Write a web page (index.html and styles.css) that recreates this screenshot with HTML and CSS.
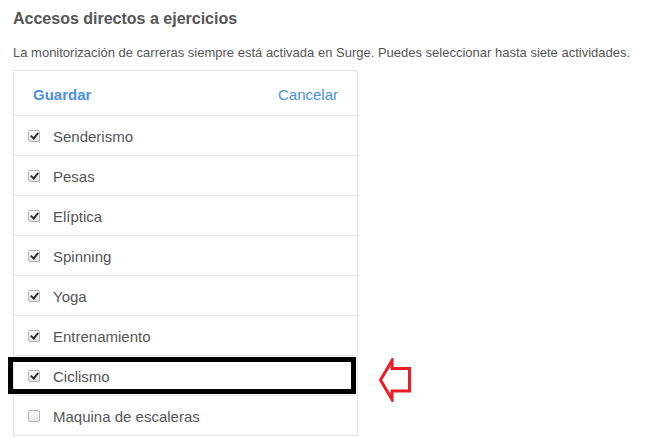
FILE: index.html
```html
<!DOCTYPE html>
<html lang="es">

<head>
    <meta charset="UTF-8">
    <meta name="viewport" content="width=device-width, initial-scale=1.0">
    <title>Accesos directos a ejercicios</title>
    <link rel="stylesheet" href="styles.css">
</head>

<body>
    <div class="page">
        <h2 class="title">Accesos directos a ejercicios</h2>
        <p class="note">La monitorización de carreras siempre está activada en Surge. Puedes seleccionar hasta siete actividades.</p>

        <div class="shortcut-list">
            <div class="list-header">
                <a class="btn-save" href="#">Guardar</a>
                <a class="btn-cancel" href="#">Cancelar</a>
            </div>

            <div class="list-row">
                <span class="check is-checked"></span>
                <span class="label">Senderismo</span>
            </div>
            <div class="list-row">
                <span class="check is-checked"></span>
                <span class="label">Pesas</span>
            </div>
            <div class="list-row">
                <span class="check is-checked"></span>
                <span class="label">Elíptica</span>
            </div>
            <div class="list-row">
                <span class="check is-checked"></span>
                <span class="label">Spinning</span>
            </div>
            <div class="list-row">
                <span class="check is-checked"></span>
                <span class="label">Yoga</span>
            </div>
            <div class="list-row">
                <span class="check is-checked"></span>
                <span class="label">Entrenamiento</span>
            </div>
            <div class="list-row marked">
                <span class="check is-checked"></span>
                <span class="label">Ciclismo</span>
                <!-- resaltado + flecha -->
                <span class="highlight"></span>
                <svg class="pointer" width="34" height="44" viewBox="0 0 34 44">
                    <polygon points="2.5,22 14,2.5 14,10.5 31.5,10.5 31.5,33 14,33 14,41.5" fill="none" stroke="#ec1c24" stroke-width="3" stroke-linejoin="miter" />
                </svg>
            </div>
            <div class="list-row">
                <span class="check"></span>
                <span class="label">Maquina de escaleras</span>
            </div>
            <div class="list-row list-end"></div>
        </div>
    </div>
</body>

</html>
```

FILE: styles.css
```css
body {
    font-family: "Liberation Sans", Arial, sans-serif;
    color: #555;
    margin: 0;
    padding: 0;
    background: #fff;
}

.page {
    padding: 9px 0 0 13px;
}

.title {
    font-size: 16px;
    font-weight: bold;
    color: #555;
    margin: 0;
    line-height: 20px;
}

.note {
    font-size: 13px;
    margin: 16px 0 0 0;
    line-height: 16px;
}

.shortcut-list {
    width: 343px;
    border: 1px solid #e3e3e3;
    border-bottom: none;
    margin-top: 9px;
}

.list-header {
    display: flex;
    justify-content: space-between;
    align-items: center;
    height: 44px;
    padding: 0 19px 0 19px;
}

.list-header a {
    font-size: 15px;
    color: #4a90e2;
    text-decoration: none;
    padding-top: 2px;
}

.btn-save {
    font-weight: bold;
}

.list-row {
    position: relative;
    display: flex;
    align-items: center;
    height: 39px;
    border-top: 1px solid #e3e3e3;
    padding-left: 14px;
}

.list-end {
    height: 10px;
}

.label {
    font-size: 15px;
    color: #555;
    padding-top: 1px;
}

.check {
    position: relative;
    box-sizing: border-box;
    width: 12px;
    height: 12px;
    margin-right: 13px;
    border: 1px solid #b4b4b4;
    border-radius: 2px;
    background: linear-gradient(#fcfcfc, #e6e6e6);
}

.check.is-checked::after {
    content: "";
    position: absolute;
    left: 3px;
    top: 0px;
    width: 3px;
    height: 6px;
    border: solid #333;
    border-width: 0 2px 2px 0;
    transform: rotate(40deg);
}

.highlight {
    position: absolute;
    left: -6px;
    top: 1px;
    width: 348px;
    height: 37px;
    box-sizing: border-box;
    border: 5px solid #000;
}

.pointer {
    position: absolute;
    left: 364px;
    top: 2px;
}
```
